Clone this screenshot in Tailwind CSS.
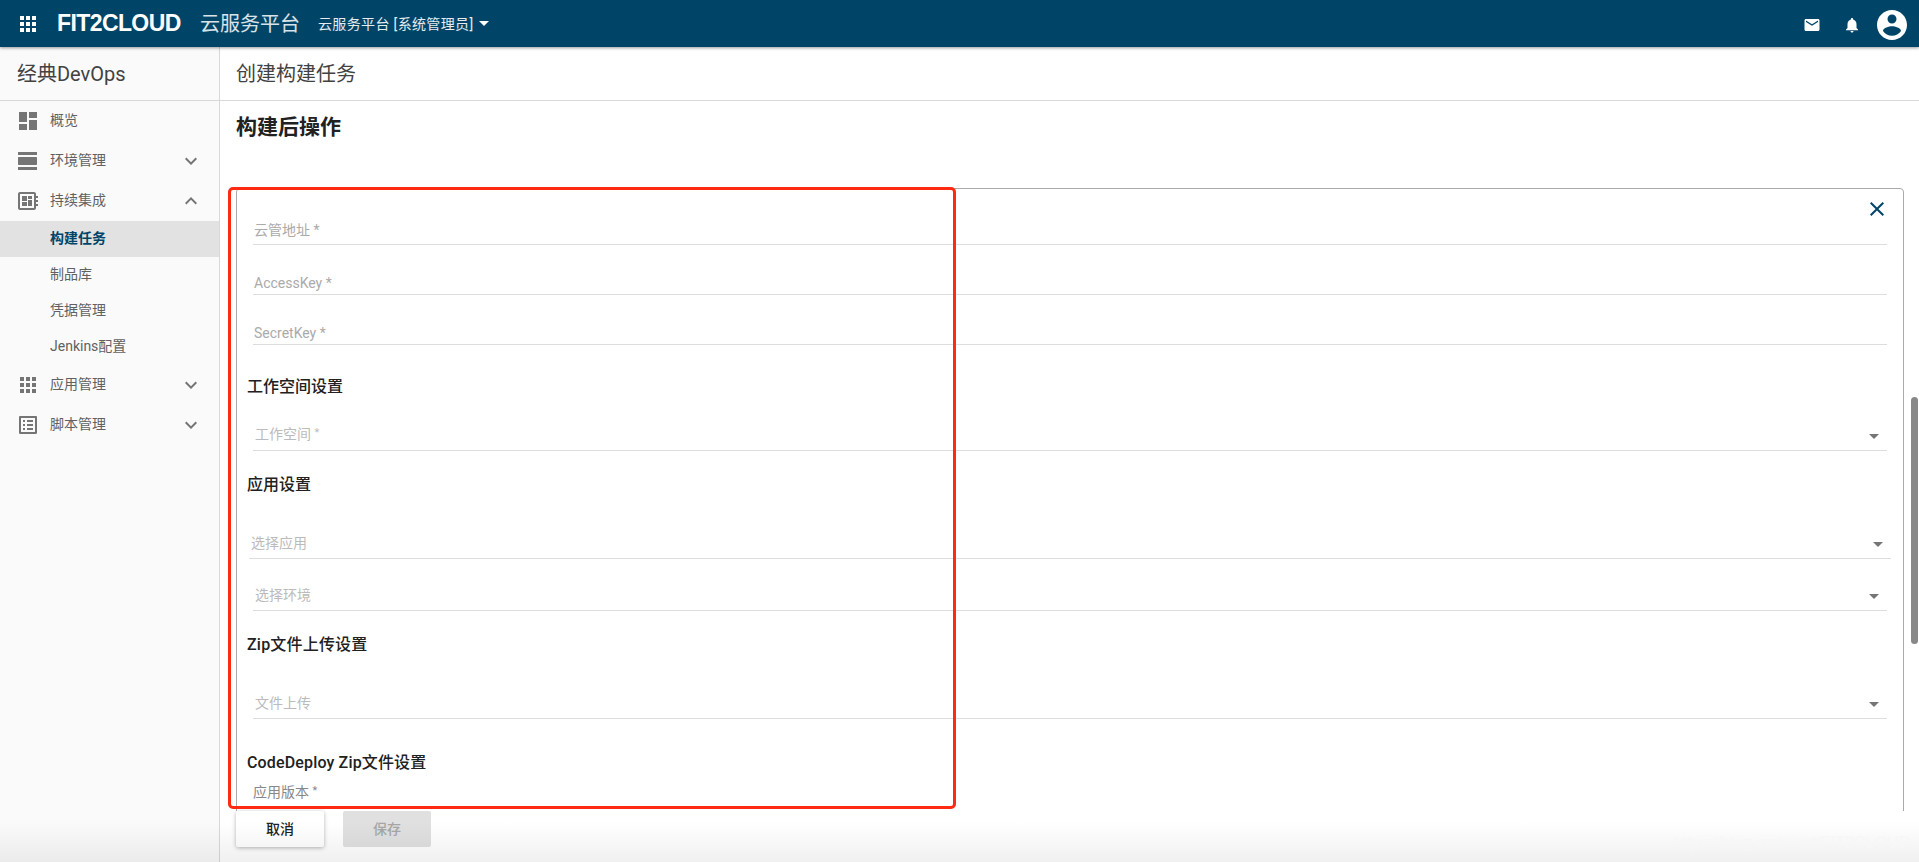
<!DOCTYPE html>
<html lang="zh-CN">
<head>
    <meta charset="UTF-8">
    <meta name="viewport" content="width=device-width, initial-scale=1.0">
    <title>创建构建任务</title>
    <script src="https://cdn.jsdelivr.net/npm/@tailwindcss/browser@4"></script>
</head>
<body class="relative h-screen overflow-hidden bg-white font-['Roboto','Noto_Sans_CJK_SC',sans-serif] text-sm text-[#212121]">

    <!-- top bar -->
    <header class="relative z-10 flex h-[47px] items-center bg-[#004568] pr-[9px] pl-4 text-white shadow-[0_1px_3px_rgba(0,0,0,0.4)]">
        <svg class="h-6 w-6 fill-white" viewBox="0 0 24 24"><path d="M4 8h4V4H4v4zm6 12h4v-4h-4v4zm-6 0h4v-4H4v4zm0-6h4v-4H4v4zm6 0h4v-4h-4v4zm6-10v4h4V4h-4zm-6 4h4V4h-4v4zm6 6h4v-4h-4v4zm0 6h4v-4h-4v4z"/></svg>
        <span class="ml-[17px] w-[143px] font-['Liberation_Sans',sans-serif] text-[23px] font-bold tracking-[-0.6px]">FIT2CLOUD</span>
        <span class="text-xl text-white/85">云服务平台</span>
        <span class="ml-[18px] flex items-center text-sm tracking-[0.35px] text-white/90">云服务平台 [系统管理员]
            <svg class="ml-[6px] h-[5px] w-[10px] fill-white" viewBox="0 0 10 5"><path d="M0 0h10L5 5z"/></svg>
        </span>
        <div class="mt-[3px] ml-auto flex items-center">
            <svg class="h-[18px] w-[18px] fill-white" viewBox="0 0 24 24"><path d="M20 4H4c-1.1 0-1.99.9-1.99 2L2 18c0 1.1.9 2 2 2h16c1.1 0 2-.9 2-2V6c0-1.1-.9-2-2-2zm0 4l-8 5-8-5V6l8 5 8-5v2z"/></svg>
            <svg class="ml-[22px] h-[18px] w-[18px] fill-white" viewBox="0 0 24 24"><path d="M12 22c1.1 0 2-.9 2-2h-4c0 1.1.89 2 2 2zm6-6v-5c0-3.07-1.64-5.64-4.5-6.32V4c0-.83-.67-1.5-1.5-1.5s-1.5.67-1.5 1.5v.68C7.63 5.36 6 7.92 6 11v5l-2 2v1h16v-1l-2-2z"/></svg>
            <svg class="ml-[13px] h-9 w-9 fill-white" viewBox="0 0 24 24"><path d="M12 2C6.48 2 2 6.48 2 12s4.48 10 10 10 10-4.48 10-10S17.52 2 12 2zm0 3c1.66 0 3 1.34 3 3s-1.34 3-3 3-3-1.34-3-3 1.34-3 3-3zm0 14.2c-2.5 0-4.71-1.28-6-3.22.03-1.99 4-3.08 6-3.08 1.99 0 5.97 1.09 6 3.08-1.29 1.94-3.5 3.22-6 3.22z"/></svg>
        </div>
    </header>

    <div class="flex h-[815px]">
        <!-- sidebar -->
        <aside class="h-full w-[220px] shrink-0 border-r border-[#d8d8d8] bg-[#fafafa] text-[#616161]">
            <div class="flex h-[54px] items-center border-b border-[#d8d8d8] pl-[17px] text-xl text-[#424242]">经典DevOps</div>
            <nav>
                <div class="flex h-10 items-center pl-4">
                    <svg class="h-6 w-6 fill-[#757575]" viewBox="0 0 24 24"><path d="M3 13h8V3H3v10zm0 8h8v-6H3v6zm10 0h8V11h-8v10zm0-18v6h8V3h-8z"/></svg>
                    <span class="mb-[2px] ml-[10px]">概览</span>
                </div>
                <div class="flex h-10 items-center pr-4 pl-4">
                    <svg class="h-6 w-6 fill-[#757575]" viewBox="0 0 24 24"><path d="M2 21h19v-3H2v3zM20 8H3c-.55 0-1 .45-1 1v6c0 .55.45 1 1 1h17c.55 0 1-.45 1-1V9c0-.55-.45-1-1-1zM2 3v3h19V3H2z"/></svg>
                    <span class="mb-[2px] ml-[10px]">环境管理</span>
                    <svg class="ml-auto h-6 w-6 fill-[#757575]" viewBox="0 0 24 24"><path d="M16.59 8.59L12 13.17 7.41 8.59 6 10l6 6 6-6z"/></svg>
                </div>
                <div class="flex h-10 items-center pr-4 pl-4">
                    <svg class="h-6 w-6 fill-[#757575]" viewBox="0 0 24 24"><path d="M22 9V7h-2V5c0-1.1-.9-2-2-2H4c-1.1 0-2 .9-2 2v14c0 1.1.9 2 2 2h14c1.1 0 2-.9 2-2v-2h2v-2h-2v-2h2v-2h-2V9h2zm-4 10H4V5h14v14zM6 13h5v4H6zm6-6h4v3h-4zM6 7h5v5H6zm6 4h4v6h-4z"/></svg>
                    <span class="mb-[2px] ml-[10px]">持续集成</span>
                    <svg class="ml-auto h-6 w-6 fill-[#757575]" viewBox="0 0 24 24"><path d="M12 8l-6 6 1.41 1.41L12 10.83l4.59 4.58L18 14z"/></svg>
                </div>
                <div class="flex h-9 items-center bg-[#e2e2e2] pb-[2px] pl-[50px] font-bold text-[#004568]">构建任务</div>
                <div class="flex h-9 items-center pb-[2px] pl-[50px]">制品库</div>
                <div class="flex h-9 items-center pb-[2px] pl-[50px]">凭据管理</div>
                <div class="flex h-9 items-center pb-[2px] pl-[50px]">Jenkins配置</div>
                <div class="flex h-10 items-center pr-4 pl-4">
                    <svg class="h-6 w-6 fill-[#757575]" viewBox="0 0 24 24"><path d="M4 8h4V4H4v4zm6 12h4v-4h-4v4zm-6 0h4v-4H4v4zm0-6h4v-4H4v4zm6 0h4v-4h-4v4zm6-10v4h4V4h-4zm-6 4h4V4h-4v4zm6 6h4v-4h-4v4zm0 6h4v-4h-4v4z"/></svg>
                    <span class="mb-[2px] ml-[10px]">应用管理</span>
                    <svg class="ml-auto h-6 w-6 fill-[#757575]" viewBox="0 0 24 24"><path d="M16.59 8.59L12 13.17 7.41 8.59 6 10l6 6 6-6z"/></svg>
                </div>
                <div class="flex h-10 items-center pr-4 pl-4">
                    <svg class="h-6 w-6 fill-[#757575]" viewBox="0 0 24 24"><path d="M19 5v14H5V5h14m1.1-2H3.9c-.5 0-.9.4-.9.9v16.2c0 .4.4.9.9.9h16.2c.4 0 .9-.5.9-.9V3.9c0-.5-.5-.9-.9-.9zM11 7h6v2h-6V7zm0 4h6v2h-6v-2zm0 4h6v2h-6zM7 7h2v2H7zm0 4h2v2H7zm0 4h2v2H7z"/></svg>
                    <span class="mb-[2px] ml-[10px]">脚本管理</span>
                    <svg class="ml-auto h-6 w-6 fill-[#757575]" viewBox="0 0 24 24"><path d="M16.59 8.59L12 13.17 7.41 8.59 6 10l6 6 6-6z"/></svg>
                </div>
            </nav>
        </aside>

        <!-- main -->
        <main class="flex min-w-0 flex-1 flex-col">
            <div class="flex h-[54px] shrink-0 items-center border-b border-[#d8d8d8] pl-4 text-xl text-[#424242]">创建构建任务</div>

            <div class="h-[710px] shrink-0 overflow-hidden pr-[15px] pl-4">
                <h2 class="mt-[11px] h-[30px] text-[21px] leading-[30px] font-bold">构建后操作</h2>

                <section class="relative mt-[46px] h-[800px] rounded-t-[4px] border border-[#aaaaaa] px-4 text-[#aaaaaa]">
                    <svg class="absolute top-[8px] right-[14px] h-6 w-6 fill-[#004568]" viewBox="0 0 24 24"><path d="M19 6.41L17.59 5 12 10.59 6.41 5 5 6.41 10.59 12 5 17.59 6.41 19 12 13.41 17.59 19 19 17.59 13.41 12z"/></svg>

                    <div class="mt-[26px] flex h-[30px] items-end border-b border-[#dddddd] pb-1 pl-[1px] leading-5">云管地址 *</div>
                    <div class="mt-5 flex h-[30px] items-end border-b border-[#dddddd] pb-[1px] pl-[1px] leading-5">AccessKey *</div>
                    <div class="mt-5 flex h-[30px] items-end border-b border-[#dddddd] pb-[1px] pl-[1px] leading-5">SecretKey *</div>

                    <h3 class="mt-[30px] -ml-[6px] h-6 text-base leading-6 font-medium text-[#212121]">工作空间设置</h3>
                    <div class="mt-[22px] flex h-[30px] items-end justify-between border-b border-[#dddddd] pr-2 pb-1 pl-[2px] leading-5 text-[#bbbbbb]">
                        <span>工作空间 <span class="relative -top-[3px] text-[11px]">*</span></span>
                        <svg class="mb-[7px] h-[5px] w-[10px] fill-[#757575]" viewBox="0 0 10 5"><path d="M0 0h10L5 5z"/></svg>
                    </div>

                    <h3 class="mt-[22px] -ml-[6px] h-6 text-base leading-6 font-medium text-[#212121]">应用设置</h3>
                    <div class="mt-8 -mr-1 -ml-1 flex h-[30px] items-end justify-between border-b border-[#dddddd] pr-2 pb-[5px] pl-[2px] leading-5 text-[#bbbbbb]">
                        <span>选择应用</span>
                        <svg class="mb-[6px] h-[5px] w-[10px] fill-[#757575]" viewBox="0 0 10 5"><path d="M0 0h10L5 5z"/></svg>
                    </div>
                    <div class="mt-[22px] flex h-[30px] items-end justify-between border-b border-[#dddddd] pr-2 pb-[5px] pl-[2px] leading-5 text-[#bbbbbb]">
                        <span>选择环境</span>
                        <svg class="mb-[6px] h-[5px] w-[10px] fill-[#757575]" viewBox="0 0 10 5"><path d="M0 0h10L5 5z"/></svg>
                    </div>

                    <h3 class="mt-[22px] -ml-[6px] h-6 text-base leading-6 font-medium tracking-[0.2px] text-[#212121]">Zip文件上传设置</h3>
                    <div class="mt-8 flex h-[30px] items-end justify-between border-b border-[#dddddd] pr-2 pb-[5px] pl-[2px] leading-5 text-[#bbbbbb]">
                        <span>文件上传</span>
                        <svg class="mb-[6px] h-[5px] w-[10px] fill-[#757575]" viewBox="0 0 10 5"><path d="M0 0h10L5 5z"/></svg>
                    </div>

                    <h3 class="mt-8 -ml-[6px] h-6 text-base leading-6 font-medium tracking-[0.15px] text-[#212121]">CodeDeploy Zip文件设置</h3>
                    <div class="mt-[7px] leading-5 text-[#888888]">应用版本 <span class="relative -top-[3px] text-[11px]">*</span></div>
                </section>
            </div>

            <div class="flex gap-[19px] pl-4">
                <button class="h-9 w-[88px] rounded-[2px] bg-white font-medium text-[#212121] shadow-[0_1px_4px_rgba(0,0,0,0.3)]">取消</button>
                <button class="h-9 w-[88px] rounded-[2px] bg-[#e0e0e0] font-medium text-[#a6a6a6]">保存</button>
            </div>
        </main>
    </div>

    <!-- scrollbar thumb -->
    <div class="absolute top-[397px] right-[1px] h-[247px] w-[7px] rounded-[4px] bg-[#888888]"></div>

    <!-- annotation drawn on the screenshot -->
    <div class="absolute top-[187px] left-[228px] h-[622px] w-[728px] rounded-[5px] border-[3px] border-[#ff2a12]"></div>

    <!-- bottom fade and watermark -->
    <div class="pointer-events-none absolute right-0 bottom-0 left-0 h-[40px] bg-linear-to-t from-black/6 to-transparent"></div>
    <span class="absolute right-[9px] bottom-[9px] font-['Liberation_Sans',sans-serif] text-base leading-5 text-[#f7f7f7]">https://blog.csdn.net/FIT2CLOUD</span>
</body>
</html>
